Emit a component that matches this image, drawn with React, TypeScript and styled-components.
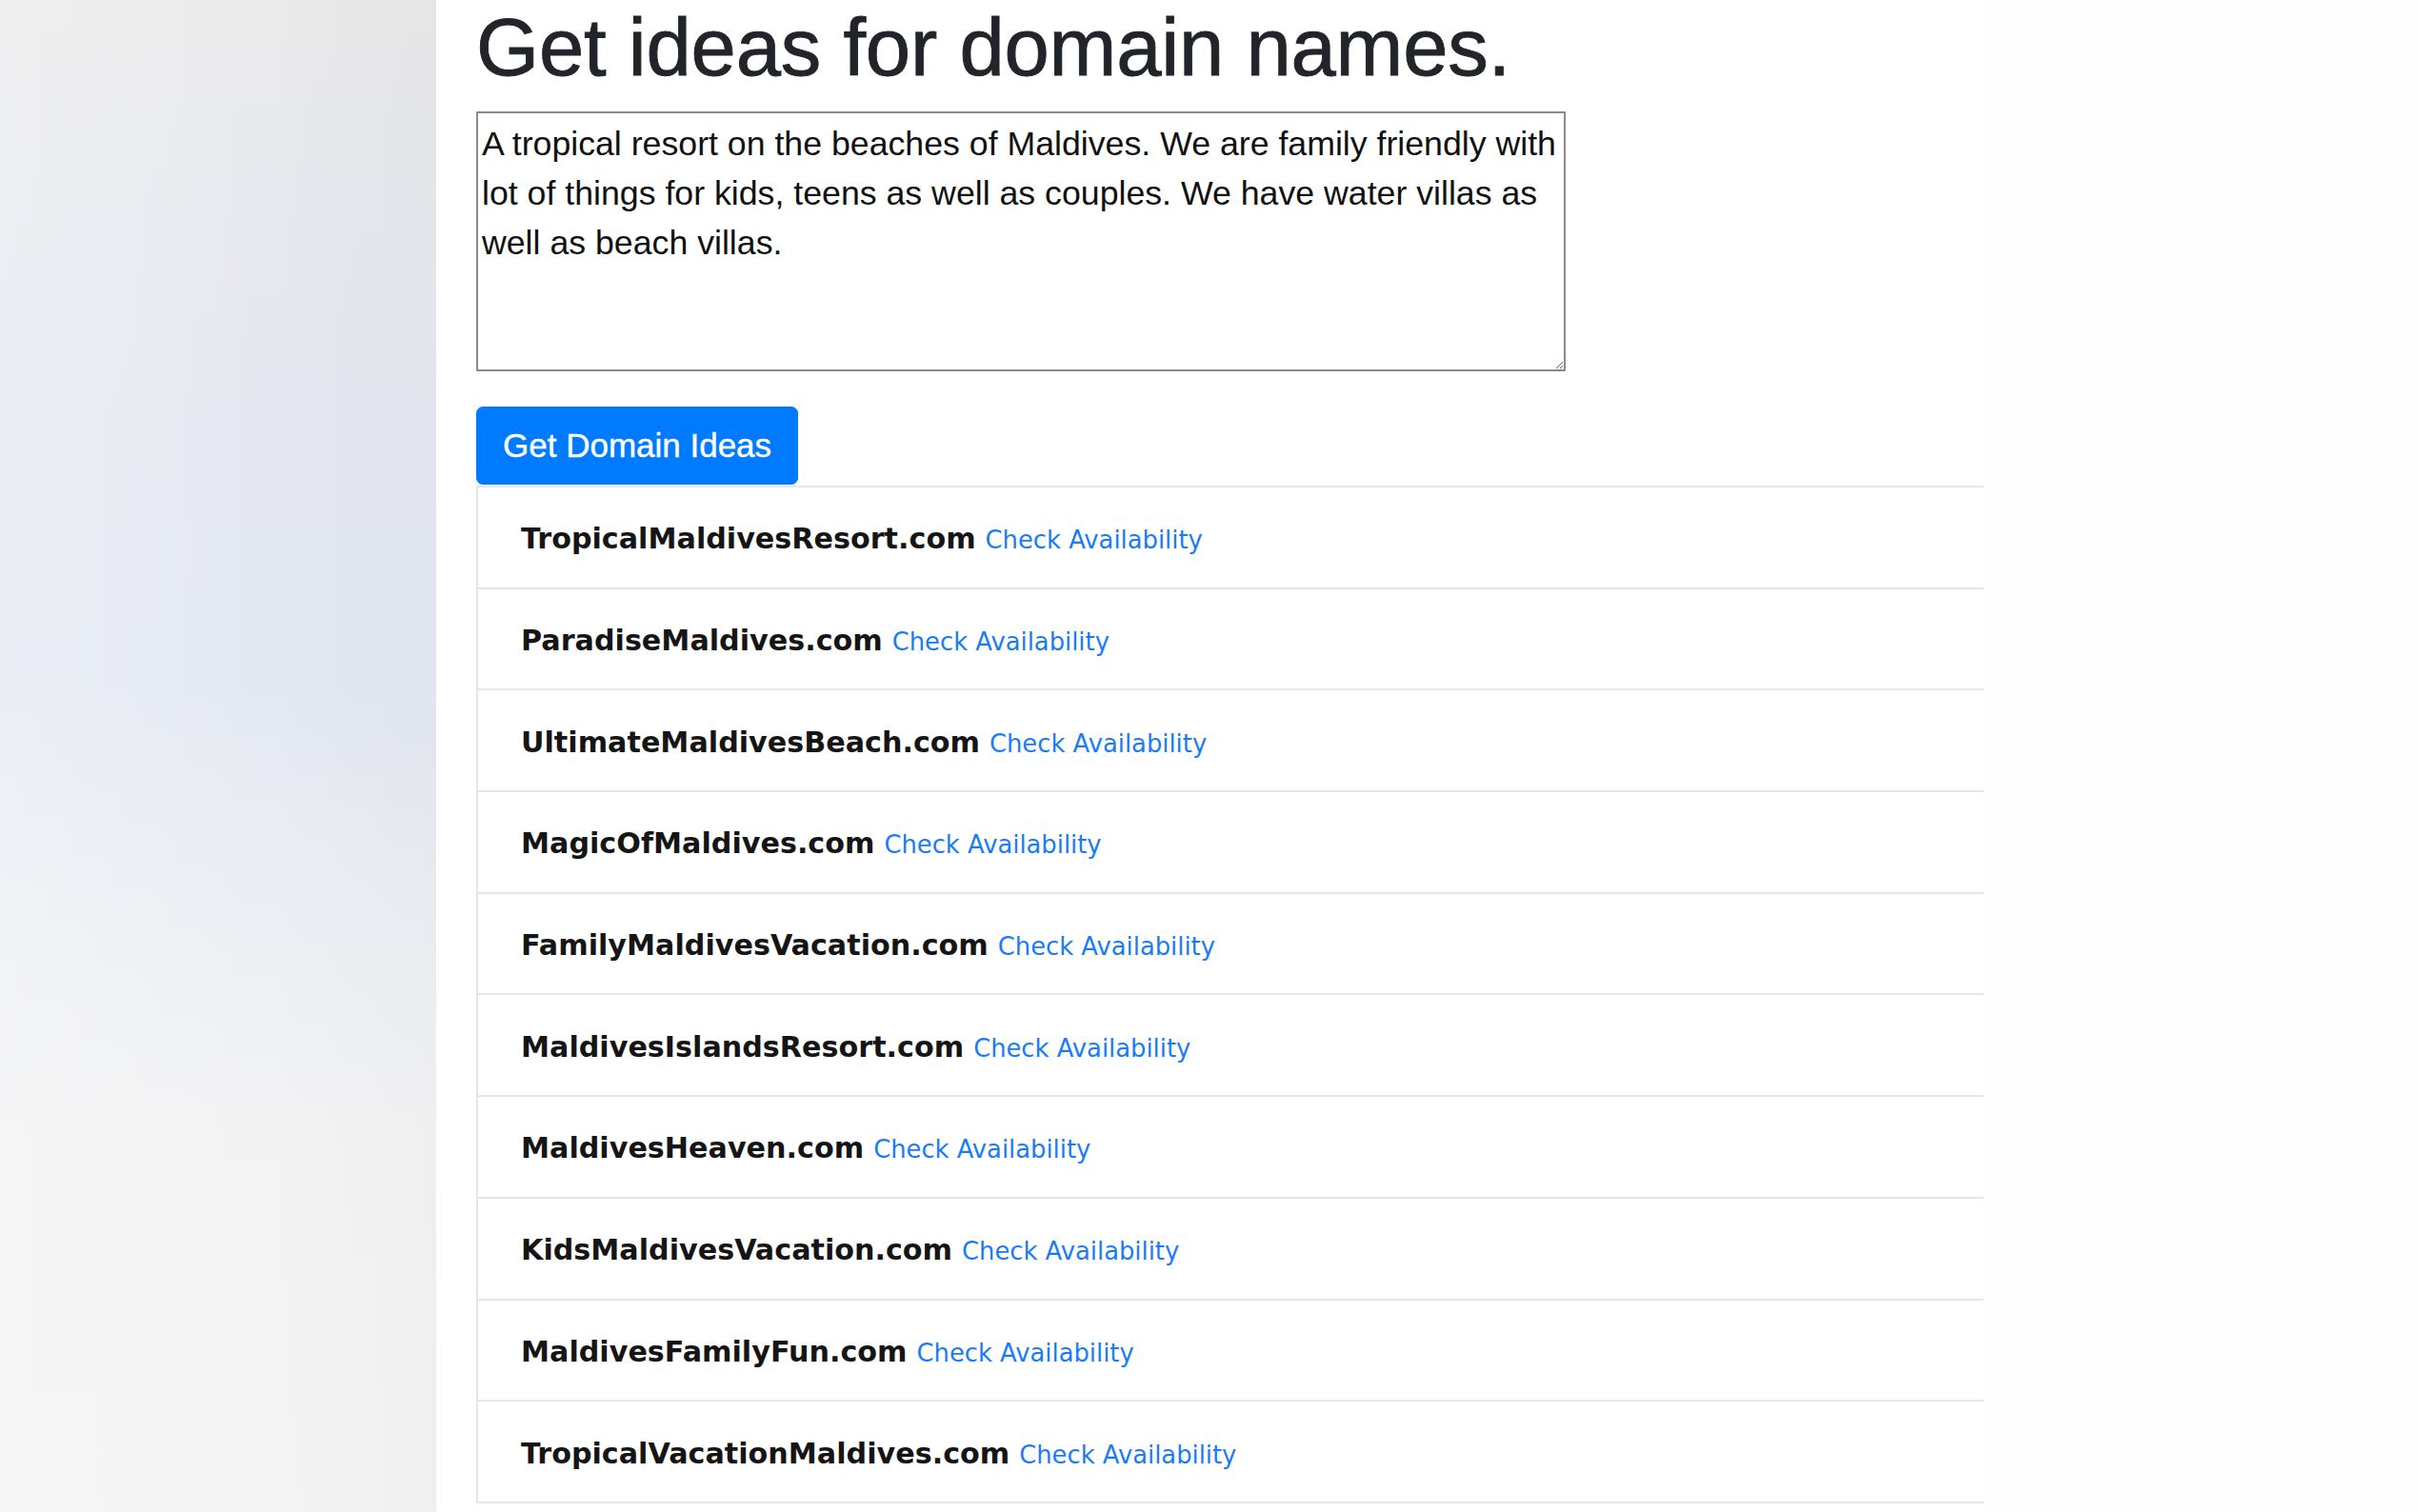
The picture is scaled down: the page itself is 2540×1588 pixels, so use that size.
import React from "react";
import styled, { createGlobalStyle } from "styled-components";

const GlobalStyle = createGlobalStyle`
  html, body {
    margin: 0;
    padding: 0;
    overflow: hidden;
    background: #ffffff;
  }
  * { box-sizing: border-box; }
`;

const Page = styled.div`
  display: flex;
  width: 100%;
  height: 1588px;
  overflow: hidden;
  background: #fdfdfd;
`;

const Sidebar = styled.aside`
  flex: 0 0 458px;
  height: 100%;
  background:
    linear-gradient(to right, rgba(255,255,255,0.25) 0%, rgba(255,255,255,0) 60%, rgba(0,0,0,0.015) 100%),
    linear-gradient(to bottom, #eaeaea 0%, #e8e9ee 12%, #e5e8f1 28%, #e4e8f2 45%, #eceef3 60%, #f3f3f4 75%, #f4f4f4 100%);
`;

const Main = styled.main`
  flex: 0 0 1625px;
  background: #ffffff;
  padding-left: 42px;
  display: flex;
  flex-direction: column;
  align-items: flex-start;
  & > * {
    flex-shrink: 0;
  }
`;

const Title = styled.h1`
  margin: 0 0 17px 0;
  font-family: "Liberation Sans", Arial, Helvetica, sans-serif;
  font-size: 85px;
  line-height: 100px;
  font-weight: 400;
  color: #212529;
  -webkit-text-stroke: 0.9px #212529;
  letter-spacing: -0.2px;
`;

const Description = styled.textarea`
  width: 1144px;
  height: 273px;
  margin: 0;
  padding: 6px 4px 4px 4px;
  border: 2px solid #8a8a8a;
  border-radius: 1px;
  font-family: "Liberation Sans", Arial, Helvetica, sans-serif;
  font-size: 35.7px;
  line-height: 52px;
  color: #111;
  background: #fff;
  resize: vertical;
  outline: none;
`;

const PrimaryButton = styled.button`
  margin-top: 37px;
  height: 82px;
  padding: 0 27px;
  border: 1px solid #007bff;
  border-radius: 7px;
  background: #007bff;
  color: #ffffff;
  font-family: "Liberation Sans", Arial, Helvetica, sans-serif;
  font-size: 35px;
  line-height: 1.5;
  font-weight: 400;
  -webkit-text-stroke: 0.4px #ffffff;
  cursor: pointer;
`;

const ResultList = styled.ul`
  list-style: none;
  margin: 1px 0 0 0;
  padding: 0;
  width: 1583px;
  border-top: 2px solid #e6e6e6;
  border-left: 2px solid #e6e6e6;
`;

const ResultItem = styled.li`
  display: flex;
  align-items: baseline;
  align-content: center;
  flex-wrap: wrap;
  gap: 10px;
  height: 106.7px;
  padding: 3px 0 0 45px;
  border-bottom: 2px solid #e6e6e6;
`;

const DomainName = styled.span`
  font-family: "DejaVu Sans", Verdana, sans-serif;
  font-size: 30.2px;
  font-weight: 700;
  color: #151515;
`;

const CheckLink = styled.a`
  font-family: "DejaVu Sans", Verdana, sans-serif;
  font-size: 25.8px;
  font-weight: 400;
  color: #1a7cf5;
  text-decoration: none;
`;

const domains = [
  "TropicalMaldivesResort.com",
  "ParadiseMaldives.com",
  "UltimateMaldivesBeach.com",
  "MagicOfMaldives.com",
  "FamilyMaldivesVacation.com",
  "MaldivesIslandsResort.com",
  "MaldivesHeaven.com",
  "KidsMaldivesVacation.com",
  "MaldivesFamilyFun.com",
  "TropicalVacationMaldives.com",
];

export default function App() {
  return (
    <>
      <GlobalStyle />
      <Page>
        <Sidebar />
        <Main>
          <Title>Get ideas for domain names.</Title>
          <Description
            defaultValue="A tropical resort on the beaches of Maldives. We are family friendly with lot of things for kids, teens as well as couples. We have water villas as well as beach villas."
          />
          <PrimaryButton type="button">Get Domain Ideas</PrimaryButton>
          <ResultList>
            {domains.map((d) => (
              <ResultItem key={d}>
                <DomainName>{d}</DomainName>
                <CheckLink href="#">Check Availability</CheckLink>
              </ResultItem>
            ))}
          </ResultList>
        </Main>
      </Page>
    </>
  );
}
